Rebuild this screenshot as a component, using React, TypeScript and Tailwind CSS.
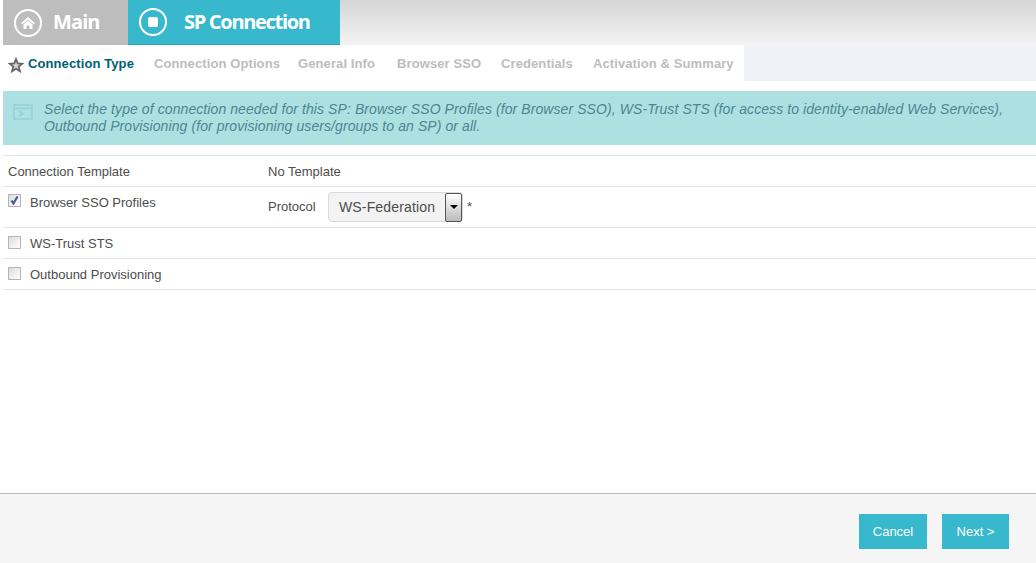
function Check({ checked }: { checked?: boolean }) {
  return (
    <span className="mt-[-1px] flex h-[13px] w-[13px] shrink-0 items-center justify-center border border-[#b4b4b4] bg-gradient-to-br from-[#dcdcdc] to-white">
      {checked && (
        <svg viewBox="0 0 11 11" className="h-[11px] w-[11px]">
          <path d="M2.5 5.5 L4.5 8.5 L8.5 1.5" fill="none" stroke="#4a5a90" strokeWidth="2.2" />
        </svg>
      )}
    </span>
  )
}

export default function App() {
  const steps = [
    { label: 'Connection Options', width: 'w-[144px]' },
    { label: 'General Info', width: 'w-[99px]' },
    { label: 'Browser SSO', width: 'w-[104px]' },
    { label: 'Credentials', width: 'w-[92px]' },
    { label: 'Activation & Summary', width: 'w-[142px]' },
  ]

  return (
    <div className="flex h-[563px] w-[1036px] flex-col overflow-hidden bg-white font-['Liberation_Sans',sans-serif] text-[13px] text-[#4d4d4d]">
      {/* top header */}
      <div className="ml-[3px] flex h-[45px] shrink-0 bg-gradient-to-b from-[#d6d6d6] to-[#f3f3f3]">
        <div className="flex w-[125px] items-center gap-[11px] bg-[#bdbdbd] pl-[11px] text-white">
          <span className="flex h-[28px] w-[28px] items-center justify-center rounded-full border-2 border-white">
            <svg viewBox="0 0 16 16" className="h-[16px] w-[16px]" fill="white">
              <path d="M8 2 L15 8.3 L13.6 9.4 L8 4.6 L2.4 9.4 L1 8.3 Z" />
              <path d="M3.5 9.4 L8 5.6 L12.5 9.4 V14 H9.5 V10.5 H6.5 V14 H3.5 Z" />
            </svg>
          </span>
          <span className="mt-[-1px] font-['Open_Sans',sans-serif] text-[20px] font-bold tracking-[-0.9px]">Main</span>
        </div>
        <div className="flex w-[212px] items-center gap-[17px] border-b border-[#2ba6b9] bg-[#37b8cc] pl-[11px] text-white">
          <span className="flex h-[28px] w-[28px] items-center justify-center rounded-full border-2 border-white">
            <span className="h-[10px] w-[10px] rounded-[2px] bg-white" />
          </span>
          <span className="font-['Open_Sans',sans-serif] text-[20px] font-bold tracking-[-1.3px]">SP Connection</span>
        </div>
      </div>

      {/* wizard steps */}
      <div className="ml-[3px] flex h-[36px] shrink-0 bg-[#eff2f6]">
        <div className="flex w-[741px] items-center bg-white pt-[2px] text-[13px] font-bold tracking-[0.1px]">
          <svg viewBox="0 0 24 24" className="ml-[5px] mt-[1px] h-[16px] w-[16px]">
            <path d="M12 3 L14.6 9.6 L21.5 10 L16.2 14.5 L18 21.5 L12 17.6 L6 21.5 L7.8 14.5 L2.5 10 L9.4 9.6 Z" fill="#d0d0d0" stroke="#666" strokeWidth="2.6" />
          </svg>
          <span className="ml-[4px] w-[126px] whitespace-nowrap text-[#005f73]">Connection Type</span>
          {steps.map((step) => (
            <span key={step.label} className={`${step.width} whitespace-nowrap text-[#bdbdbd]`}>{step.label}</span>
          ))}
        </div>
      </div>

      {/* help text */}
      <div className="ml-[3px] mt-[10px] flex h-[54px] shrink-0 items-center bg-[#ade0e0] pl-[10px] pr-2 text-sm italic leading-[17px] tracking-[0.085px] text-[#4d8595]">
        <svg viewBox="0 0 20 16" className="mr-[11px] mt-[-13px] h-[16px] w-[20px] shrink-0" fill="none" stroke="#95d2dc" strokeWidth="1.6">
          <rect x="1" y="1" width="18" height="14" />
          <path d="M1 4.5 H19" />
          <path d="M6 7 L10 9.7 L6 12.5" strokeWidth="1.8" />
        </svg>
        <p>
          Select the type of connection needed for this SP: Browser SSO Profiles (for Browser SSO), WS-Trust STS (for access to identity-enabled Web Services),
          <br />
          Outbound Provisioning (for provisioning users/groups to an SP) or all.
        </p>
      </div>

      {/* form rows */}
      <div className="ml-[3px] mt-[10px] border-t border-[#e4e4e4]">
        <div className="flex h-[31px] items-center border-b border-[#e4e4e4] pl-[5px] pt-[1px]">
          <span className="w-[260px]">Connection Template</span>
          <span>No Template</span>
        </div>
        <div className="flex h-[41px] border-b border-[#e4e4e4] pl-[5px]">
          <div className="flex w-[260px] items-start gap-[9px] pt-[8px]">
            <Check checked />
            <span className="mt-[-2px]">Browser SSO Profiles</span>
          </div>
          <div className="flex items-center">
            <span className="w-[60px]">Protocol</span>
            <div className="flex h-[30px] w-[135px] items-center justify-between rounded-[4px] border border-[#d9d9d9] bg-[#f3f3f3] pl-[10px] text-sm tracking-[0.15px]">
              <span>WS-Federation</span>
              <span className="flex h-[29px] w-[17px] items-center justify-center rounded-[2px] border border-[#555] bg-gradient-to-b from-white to-[#bcbcbc]">
                <span className="h-0 w-0 border-x-[4px] border-t-[4px] border-x-transparent border-t-black" />
              </span>
            </div>
            <span className="ml-[4px]">*</span>
          </div>
        </div>
        <div className="flex h-[31px] items-center gap-[9px] border-b border-[#e4e4e4] pl-[5px]">
          <Check />
          <span className="mt-[2px]">WS-Trust STS</span>
        </div>
        <div className="flex h-[31px] items-center gap-[9px] border-b border-[#e4e4e4] pl-[5px]">
          <Check />
          <span className="mt-[2px]">Outbound Provisioning</span>
        </div>
      </div>

      {/* footer */}
      <div className="mt-auto flex h-[70px] shrink-0 items-start justify-end gap-[15px] border-t border-[#b9b9b9] bg-[#f5f5f5] pr-[27px] pt-[20px] text-white">
        <button className="flex h-[35px] w-[68px] items-center justify-center bg-[#37b8cc]">Cancel</button>
        <button className="flex h-[35px] w-[67px] items-center justify-center bg-[#37b8cc]">Next &gt;</button>
      </div>
    </div>
  )
}
